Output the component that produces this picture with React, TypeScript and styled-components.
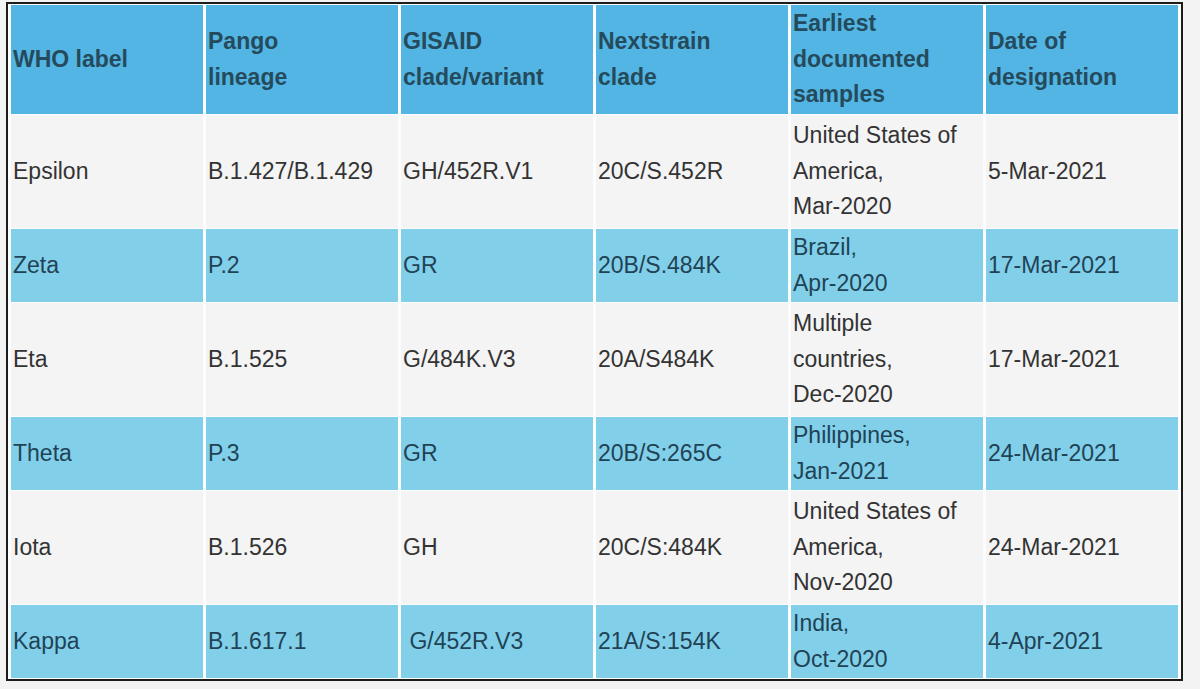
import React from 'react';
import styled, { createGlobalStyle } from 'styled-components';

const GlobalStyle = createGlobalStyle`
  html, body {
    margin: 0;
    padding: 0;
    background: #f3f3f3;
  }
  body {
    font-family: "Liberation Sans", Arial, sans-serif;
  }
`;

type Row = {
  cells: string[][];
  highlight: boolean;
  tall: boolean;
};

const headers: string[][] = [
  ['WHO label'],
  ['Pango', 'lineage'],
  ['GISAID', 'clade/variant'],
  ['Nextstrain', 'clade'],
  ['Earliest', 'documented', 'samples'],
  ['Date of', 'designation'],
];

const rows: Row[] = [
  {
    highlight: false,
    tall: true,
    cells: [['Epsilon'], ['B.1.427/B.1.429'], ['GH/452R.V1'], ['20C/S.452R'], ['United States of', 'America,', 'Mar-2020'], ['5-Mar-2021']],
  },
  {
    highlight: true,
    tall: false,
    cells: [['Zeta'], ['P.2'], ['GR'], ['20B/S.484K'], ['Brazil,', 'Apr-2020'], ['17-Mar-2021']],
  },
  {
    highlight: false,
    tall: true,
    cells: [['Eta'], ['B.1.525'], ['G/484K.V3'], ['20A/S484K'], ['Multiple', 'countries,', 'Dec-2020'], ['17-Mar-2021']],
  },
  {
    highlight: true,
    tall: false,
    cells: [['Theta'], ['P.3'], ['GR'], ['20B/S:265C'], ['Philippines,', 'Jan-2021'], ['24-Mar-2021']],
  },
  {
    highlight: false,
    tall: true,
    cells: [['Iota'], ['B.1.526'], ['GH'], ['20C/S:484K'], ['United States of', 'America,', 'Nov-2020'], ['24-Mar-2021']],
  },
  {
    highlight: true,
    tall: false,
    cells: [['Kappa'], ['B.1.617.1'], ['\u00a0G/452R.V3'], ['21A/S:154K'], ['India,', 'Oct-2020'], ['4-Apr-2021']],
  },
];

const Page = styled.div`
  padding: 2px 0 0 6px;
`;

const Table = styled.table`
  width: 1177px;
  table-layout: fixed;
  border-collapse: separate;
  border-spacing: 3px 1px;
  border: 2px solid #1c1c1c;
  background: #fbfdfe;
  font-size: 23px;
`;

const HeadCell = styled.th`
  height: 109px;
  padding: 0 2px;
  background: #52b5e3;
  color: #254a5c;
  font-weight: bold;
  text-align: left;
  vertical-align: middle;
  line-height: 35.5px;
`;

const Cell = styled.td<{ $highlight: boolean; $tall: boolean }>`
  height: ${p => (p.$tall ? 113 : 73)}px;
  padding: 0 2px;
  background: ${p => (p.$highlight ? '#82cfea' : '#f4f4f4')};
  color: ${p => (p.$highlight ? '#1f4355' : '#333333')};
  text-align: left;
  vertical-align: middle;
  line-height: 35.5px;
  white-space: nowrap;
`;

const Lines = ({ lines }: { lines: string[] }) => (
  <>
    {lines.map((l, i) => (
      <React.Fragment key={i}>
        {i > 0 && <br />}
        {l}
      </React.Fragment>
    ))}
  </>
);

export default function App() {
  return (
    <Page>
      <GlobalStyle />
      <Table>
        <thead>
          <tr>
            {headers.map((h, i) => (
              <HeadCell key={i}>
                <Lines lines={h} />
              </HeadCell>
            ))}
          </tr>
        </thead>
        <tbody>
          {rows.map((r, i) => (
            <tr key={i}>
              {r.cells.map((c, j) => (
                <Cell key={j} $highlight={r.highlight} $tall={r.tall}>
                  <Lines lines={c} />
                </Cell>
              ))}
            </tr>
          ))}
        </tbody>
      </Table>
    </Page>
  );
}
